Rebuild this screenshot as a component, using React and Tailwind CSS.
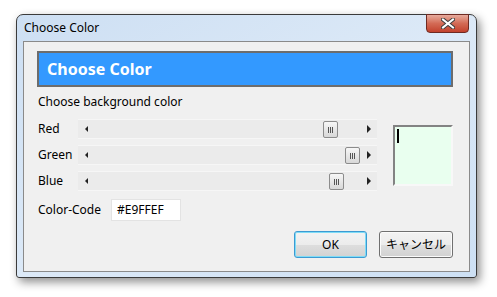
import { useState } from 'react'

const FONT = { fontFamily: '"Noto Sans", "Noto Sans CJK JP", sans-serif' }

function Slider({ label, value }) {
  const left = 17 + Math.round((value / 255) * 250)
  return (
    <div className="flex items-center h-[20px]">
      <span className="w-[40px] text-[12px] text-black">{label}</span>
      <div className="relative w-[299px] h-[20px] bg-[#ebebeb] border-t border-b border-[#f6f6f6] flex items-center justify-between">
        <div className="w-[17px] h-full flex items-center justify-center">
          <div className="w-0 h-0 border-y-[3px] border-y-transparent border-r-[3px] border-r-[#222]" />
        </div>
        <div className="w-[17px] h-full flex items-center justify-center">
          <div className="w-0 h-0 border-y-[4px] border-y-transparent border-l-[4px] border-l-[#222]" />
        </div>
        <div
          className="absolute top-[1px] w-[15px] h-[17px] rounded-[2px] border border-[#8c8c8c] bg-gradient-to-b from-[#f7f7f7] to-[#d8d8d8] flex items-center justify-center gap-[1px]"
          style={{ left }}
        >
          <div className="w-[1px] h-[6px] bg-[#555]" />
          <div className="w-[1px] h-[6px] bg-[#555]" />
          <div className="w-[1px] h-[6px] bg-[#555]" />
        </div>
      </div>
    </div>
  )
}

export default function App() {
  const [code] = useState('#E9FFEF')

  return (
    <div className="w-[497px] h-[297px] bg-white pl-[16px] pt-[14px]" style={FONT}>
      <div className="relative w-[461px] h-[264px] rounded-t-[7px] rounded-b-[3px] border border-[#3b3b3b] bg-gradient-to-br from-[#cddff3] via-[#dce9f7] to-[#cde0f4] shadow-[3px_4px_10px_rgba(0,0,0,0.45)] flex flex-col">
        <div className="h-[26px] flex items-center pl-[7px] text-[12px] text-black">Choose Color</div>
        <div className="absolute top-[-1px] right-[7px] w-[43px] h-[19px] rounded-b-[4px] border border-[#6e2a22] bg-gradient-to-b from-[#e6aa9c] via-[#d36a55] to-[#c2412c] flex items-center justify-center">
          <svg width="14" height="11" viewBox="0 0 14 11">
            <path d="M2 1.5 L12 9.5 M12 1.5 L2 9.5" stroke="#3d3d3d" strokeWidth="4" strokeLinecap="square" />
            <path d="M2 1.5 L12 9.5 M12 1.5 L2 9.5" stroke="#ffffff" strokeWidth="2" strokeLinecap="square" />
          </svg>
        </div>
        <div className="flex-1 mx-[6px] mb-[5px] border border-[#8a8a8a] bg-[#f0f0f0] pl-[13px] pt-[9px] pr-[16px]">
          <div className="h-[36px] border-2 border-[#6d6d6d] bg-[#3399ff] flex items-center pl-[8px]">
            <span className="text-[16px] font-bold text-white">Choose Color</span>
          </div>
          <div className="mt-[6px] pl-[1px] text-[12px] text-black leading-[18px]">Choose background color</div>
          <div className="flex mt-[8px] pl-[1px]">
            <div className="flex flex-col gap-[6px]">
              <Slider label="Red" value={0xe9} />
              <Slider label="Green" value={0xff} />
              <Slider label="Blue" value={0xef} />
            </div>
            <div className="ml-[16px] mt-[6px] w-[65px] h-[61px] border-t-2 border-l-2 border-[#838383] border-r-2 border-b-2 border-r-[#f8f8f8] border-b-[#f8f8f8] bg-[#e9ffef] pl-[2px] pt-[2px]">
              <div className="w-[2px] h-[14px] bg-black" />
            </div>
          </div>
          <div className="flex items-center mt-[8px] pl-[1px]">
            <span className="w-[73px] text-[12px] text-black">Color-Code</span>
            <div className="w-[70px] h-[22px] bg-white border border-[#e3e3e3] flex items-center pl-[5px] text-[12px] text-black">{code}</div>
          </div>
          <div className="flex justify-end gap-[12px] mt-[10px]">
            <button className="w-[73px] h-[27px] rounded-[3px] border border-[#3c9ad2] shadow-[inset_0_0_0_1px_#7fdcf6] bg-[linear-gradient(#f3f3f3_0%,#ececec_50%,#dedede_51%,#d2d2d2_100%)] text-[12px] text-black">OK</button>
            <button className="w-[74px] h-[27px] rounded-[3px] border border-[#707070] shadow-[inset_0_0_0_1px_#fbfbfb] bg-[linear-gradient(#f3f3f3_0%,#ececec_50%,#dedede_51%,#d2d2d2_100%)] text-[12px] text-black">キャンセル</button>
          </div>
        </div>
      </div>
    </div>
  )
}
